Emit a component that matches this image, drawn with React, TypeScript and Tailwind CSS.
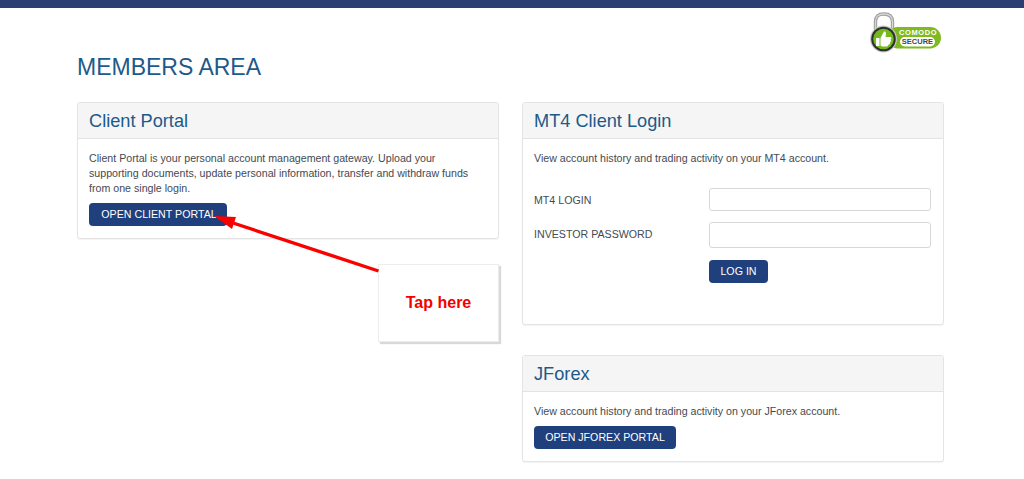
const font = { fontFamily: '"Liberation Sans", Arial, sans-serif' };

function Panel({ title, children, className }: { title: string; children: React.ReactNode; className?: string }) {
  return (
    <section className={`bg-white border border-[#e4e4e4] rounded-[3px] shadow-[0_1px_1px_rgba(0,0,0,0.05)] ${className ?? ""}`}>
      <h2 className="h-[36px] px-[11px] pt-[2px] flex items-center bg-[#f5f5f5] border-b border-[#e3e3e3] text-[18.2px] leading-none text-[#1d5a8a] rounded-t-[3px]">
        {title}
      </h2>
      <div className="px-[11px] text-[10.65px] leading-[15px] text-[#444a52]">{children}</div>
    </section>
  );
}

function Btn({ children, className }: { children: React.ReactNode; className?: string }) {
  return (
    <button className={`h-[23px] rounded-[4px] bg-[#1f3f7d] text-white text-[10.65px] leading-none flex items-center justify-center ${className ?? ""}`}>
      {children}
    </button>
  );
}

function ComodoBadge() {
  return (
    <div className="absolute left-[869px] top-[12px] w-[73px] h-[42px]">
      <svg width="73" height="42" viewBox="0 0 73 42" className="absolute left-0 top-0">
        <path d="M6.5 18 V10 C6.5 4 9.5 2 15 2 C20.5 2 23.5 4 23.5 10 V18" fill="none" stroke="#9c9c9c" strokeWidth="3.4" />
        <path d="M6.5 18 V10 C6.5 4 9.5 2 15 2 C20.5 2 23.5 4 23.5 10 V18" fill="none" stroke="#d4d4d4" strokeWidth="1.4" />
        <rect x="18" y="15" width="54" height="21.5" rx="10.7" fill="#7fba1e" />
        <rect x="31" y="25" width="35" height="9.5" rx="4.7" fill="#ffffff" />
        <circle cx="14.5" cy="27" r="13.5" fill="#c9c9c9" />
        <circle cx="14.5" cy="27" r="12.3" fill="#2f2f2f" />
        <circle cx="14.5" cy="27" r="10.3" fill="#74b91c" />
        <path d="M7 26 H10.5 V34 H7 Z M11.5 26 L15 19.5 C17 19 17.5 21 16.5 25 H21.5 C23 25.5 22.5 27 21.5 27.5 C22.5 28.5 22 30 21 30.2 C21.5 31.5 20.5 32.5 19.5 32.6 C19.5 34 18.5 34.4 17.5 34.4 H13 L11.5 33.5 Z" fill="#ffffff" />
      </svg>
      <span className="absolute left-[30px] top-[15.5px] w-[37px] text-center text-[7.5px] leading-[9px] font-bold tracking-[0.6px] text-white whitespace-nowrap">COMODO</span>
      <span className="absolute left-[31px] top-[25px] w-[35px] text-center text-[7.5px] leading-[9px] font-bold text-[#3e4a44] whitespace-nowrap">SECURE</span>
    </div>
  );
}

export default function App() {
  return (
    <div className="relative w-[1024px] h-[479px] overflow-hidden bg-white" style={font}>
      <div className="h-[8px] bg-[#2d3f72]" />
      <ComodoBadge />
      <div className="pl-[77px] pr-[80px]">
        <h1 className="mt-[46px] h-[26px] text-[23px] leading-[26px] text-[#1d5a8a]">MEMBERS AREA</h1>
        <div className="mt-[22px] flex gap-[23px] items-start">
          <div className="w-[422px]">
            <Panel title="Client Portal" className="h-[137px]">
              <p className="mt-[12px]">
                Client Portal is your personal account management gateway. Upload your
                <br />
                supporting documents, update personal information, transfer and withdraw funds
                <br />
                from one single login.
              </p>
              <Btn className="mt-[7px] w-[138px] pl-[2px]">OPEN CLIENT PORTAL</Btn>
            </Panel>
          </div>
          <div className="w-[422px] flex flex-col gap-[30px]">
            <Panel title="MT4 Client Login" className="h-[223px]">
              <p className="mt-[12px]">View account history and trading activity on your MT4 account.</p>
              <div className="mt-[22px] flex items-center">
                <label className="w-[175px] mt-[2px]">MT4 LOGIN</label>
                <input className="w-[222px] h-[23px] rounded-[3px] border border-[#d8d8d8] bg-white" />
              </div>
              <div className="mt-[11px] flex items-center">
                <label className="w-[175px] -mt-[2px]">INVESTOR PASSWORD</label>
                <input type="password" className="w-[222px] h-[26px] rounded-[3px] border border-[#d8d8d8] bg-white" />
              </div>
              <Btn className="mt-[12px] ml-[175px] w-[59px]">LOG IN</Btn>
            </Panel>
            <Panel title="JForex" className="h-[107px]">
              <p className="mt-[12px]">View account history and trading activity on your JForex account.</p>
              <Btn className="mt-[7px] w-[142px]">OPEN JFOREX PORTAL</Btn>
            </Panel>
          </div>
        </div>
      </div>

      <div className="absolute left-[378px] top-[264px] w-[121px] h-[78px] bg-white border border-[#ececec] shadow-[2px_2px_1px_#d9d9d9] flex items-center justify-center pb-[1px]">
        <span className="text-[16px] font-bold text-[#f40000] leading-none">Tap here</span>
      </div>
      <svg className="absolute left-0 top-0 pointer-events-none" width="1024" height="479" viewBox="0 0 1024 479">
        <path d="M378.5 271 L230 222" stroke="#fb0000" strokeWidth="3.4" fill="none" />
        <path d="M214 216 L236 217 L232 229 Z" fill="#fb0000" />
      </svg>
    </div>
  );
}
